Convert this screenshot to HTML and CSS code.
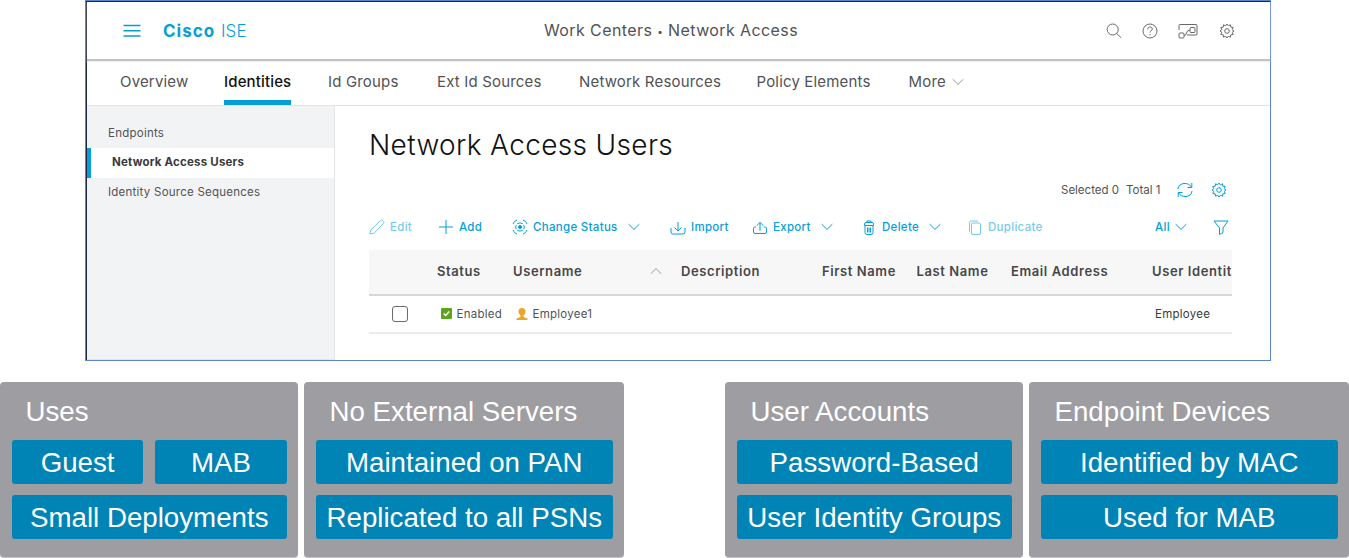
FILE: index.html
```html
<!DOCTYPE html>
<html lang="en">
<head>
<meta charset="utf-8">
<title>Cisco ISE - Network Access Users</title>
<link rel="stylesheet" href="styles.css">
</head>
<body>
<svg class="defs" width="0" height="0">
  <symbol id="chevron" viewBox="0 0 12 8"><path d="M.7 1.2 6 6.4l5.3-5.2"/></symbol>
  <symbol id="gear" viewBox="0 0 16 16"><circle cx="8" cy="8" r="2.3"/><path d="M6.7 2.8 8 1l1.3 1.8 2.2-1 .3 2.4 2.4.3-1 2.2L15 8l-1.8 1.3 1 2.2-2.4.3-.3 2.4-2.2-1L8 15l-1.300-1.800-2.200 1-.3-2.400-2.400-.3 1-2.200L1 8l1.800-1.300-1-2.200 2.400-.3.3-2.400z"/></symbol>
</svg>
<main class="window">
  <header class="topbar">
    <svg class="menu" viewBox="0 0 18 14"><path d="M.5 1.500h17M.5 6.800h17M.5 12h17"/></svg>
    <div class="brand"><b>Cisco</b> <span>ISE</span></div>
    <div class="crumb">Work Centers <i>•</i> Network Access</div>
    <div class="actions">
      <svg viewBox="0 0 16 16"><circle cx="6.700" cy="6.500" r="5.500"/><path d="m10.700 10.500 4.500 4.300"/></svg>
      <svg viewBox="0 0 16 16"><circle cx="8" cy="8" r="7"/><path d="M5.700 6.300C5.700 3.200 10.300 3.300 10.300 6 10.300 7.700 8 7.700 8 9.600M8 11v1.300"/></svg>
      <svg class="wide" viewBox="0 0 20 16"><path d="M1 7V2.500Q1 1.500 2 1.500H18Q19 1.500 19 2.500V11Q19 12 18 12H9M6 12.500Q8 12.500 8.500 10T11 7.300H12"/><rect x="1" y="10" width="5" height="5" rx="1"/><rect x="12" y="4.500" width="5" height="5" rx="1"/></svg>
      <svg><use href="#gear"/></svg>
    </div>
  </header>
  <nav class="tabs">
    <a>Overview</a><a class="on">Identities</a><a>Id Groups</a><a>Ext Id Sources</a><a>Network Resources</a><a>Policy Elements</a><a>More <svg class="chev"><use href="#chevron"/></svg></a>
  </nav>
  <div class="body">
    <aside class="side"><a>Endpoints</a><a class="on">Network Access Users</a><a>Identity Source Sequences</a></aside>
    <section class="content">
      <h1>Network Access Users</h1>
      <div class="summary">
        <span>Selected 0</span><span>Total 1</span>
        <svg viewBox="0 0 16 16"><path d="M1 7C1.500 0 12 0 14.300 5M14.800 1v4.500h-4.300M15 9C14.500 16 4 16 1.700 11M1.200 15v-4.500h4.300"/></svg>
        <svg class="cog"><use href="#gear"/></svg>
      </div>
      <div class="tools">
        <a class="off"><svg viewBox="0 0 16 16"><path d="m1 15 .7-4L11.500 1.600c1.500-1.500 4.500 1 2.900 2.900L5 14.200z"/></svg>Edit</a>
        <a><svg viewBox="0 0 16 16"><path d="M8 1v14M1 8h14"/></svg>Add</a>
        <a><svg viewBox="0 0 16 16"><circle cx="8" cy="8" r="1.500" fill="#049fd9"/><path d="M5.200 4.800Q8 2.800 10.800 4.800M5.200 11.200Q8 13.200 10.800 11.200M4.300 6Q3 8 4.300 10M11.700 6Q13 8 11.700 10M1 5Q2 2 5 1M11 1Q14 2 15 5M15 11Q14 14 11 15M5 15Q2 14 1 11"/></svg>Change Status<svg class="chev"><use href="#chevron"/></svg></a>
        <a><svg viewBox="0 0 16 16"><path d="M1 9v4q0 2 2 2h10q2 0 2-2V9M8 3v9M4.500 8.500 8 12 11.500 8.500"/></svg>Import</a>
        <a><svg viewBox="0 0 16 16"><path d="M4 8H3Q1.500 8 1.500 9.500V13q0 1.500 1.500 1.500h10q1.500 0 1.500-1.500V9.500Q14.500 8 13 8h-1M8 12V3.500M4.800 6.500 8 3.300 11.200 6.500"/></svg>Export<svg class="chev"><use href="#chevron"/></svg></a>
        <a><svg viewBox="0 0 16 16"><path d="M4 7v6.500q0 2 2 2h4q2 0 2-2V7M3.500 6.500V5q0-1.500 1.500-1.500h6q1.500 0 1.500 1.500v1.500zM6 3.500V2h4v1.500M6.500 8.500V13.500M8 8.500V13.500M9.500 8.500V13.500"/></svg>Delete<svg class="chev"><use href="#chevron"/></svg></a>
        <a class="off"><svg viewBox="0 0 16 16"><rect x="4.500" y="4" width="9" height="11.500" rx="1.500"/><path d="M2.500 12.500V3.500q0-1.500 1.500-1.500H11"/></svg>Duplicate</a>
        <a class="all">All<svg class="chev"><use href="#chevron"/></svg></a>
        <svg viewBox="0 0 16 16"><path d="M1 2h14L10 9V13.500L6.500 15.500V9z"/></svg>
      </div>
      <div class="row head">
        <span></span><span>Status</span><span>Username</span><svg class="chev up"><use href="#chevron"/></svg><span>Description</span><span>First Name</span><span>Last Name</span><span>Email Address</span><span>User Identit</span>
      </div>
      <div class="row data">
        <i class="box"></i>
        <span class="status"><svg viewBox="0 0 11 11"><rect width="11" height="11" rx="1" fill="#5aa51c"/><path d="m2.700 5.500 2 2 3.600-3.900" fill="none" stroke="#fff" stroke-width="1.500"/></svg>Enabled</span>
        <span class="user"><svg viewBox="0 0 12 12"><path fill="#e8a62c" d="M6 0C8.200 0 9.700 1.500 9.500 4 9.300 6 8 6.500 7.600 7.500V9L11.500 10.500V12H.5V10.500L4.400 9V7.500C4 6.500 2.700 6 2.500 4 2.300 1.500 3.800 0 6 0z"/></svg>Employee1</span>
        <span class="group">Employee</span>
      </div>
    </section>
  </div>
</main>
<section class="cards">
  <article class="card a"><h2>Uses</h2><p>Guest</p><p>MAB</p><p class="full">Small Deployments</p></article>
  <article class="card b"><h2>No External Servers</h2><p class="full">Maintained on PAN</p><p class="full">Replicated to all PSNs</p></article>
  <article class="card c"><h2>User Accounts</h2><p class="full">Password-Based</p><p class="full">User Identity Groups</p></article>
  <article class="card d"><h2>Endpoint Devices</h2><p class="full">Identified by MAC</p><p class="full">Used for MAB</p></article>
</section>
</body>
</html>
```
FILE: styles.css
```css
* { box-sizing: border-box; }
body { margin: 0; width: 1349px; height: 558px; overflow: hidden; background: #fff; font-family: Inter, "Liberation Sans", sans-serif; color: #525255; }
svg { width: 16px; height: 16px; fill: none; stroke: currentColor; stroke-width: 1; flex: none; }
.defs { display: none; }
.chev { width: 12px; height: 8px; }
.window { width: 1186px; height: 361px; margin-left: 85px; border: 1px solid #5c85cf; box-shadow: inset 1px 1px #20263d; padding: 1px 0 0 1px; display: flex; flex-direction: column; }

.topbar { height: 59px; flex: none; border-bottom: 2px solid #c2c2c2; box-shadow: 0 1px 1px #eee; display: grid; grid-template-columns: 36px 40px 381px 1fr 164px; align-items: center; }
.menu { width: 18px; height: 14px; margin-top: 1px; stroke: #049fd9; stroke-width: 1.500; grid-column: 2; }
.brand { font-size: 17px; color: #049fd9; letter-spacing: 1px; font-weight: 300; }
.brand b { font-weight: 700; }
.brand span { letter-spacing: .2px; }
.crumb { font-size: 16px; letter-spacing: .4px; padding-bottom: 1px; }
.crumb i { font-style: normal; font-size: 10px; vertical-align: 1px; }
.actions { display: grid; grid-template-columns: 36px 36px 41px 16px; align-items: center; color: #69696c; }
.actions .wide { width: 20px; }

.tabs { height: 45px; flex: none; border-bottom: 1px solid #e3e3e5; display: grid; grid-template-columns: 104px 104px 109px 142px 177.500px 152px 60px; padding-left: 33px; font-size: 15px; letter-spacing: .17px; line-height: 41px; white-space: nowrap; }
.tabs a { justify-self: start; height: 44px; }
.tabs .on { color: #111; font-weight: 500; border-bottom: 5px solid #049fd9; letter-spacing: .15px; }
.tabs .chev { margin-left: 2px; vertical-align: 1px; stroke: #999; }

.body { flex: 1; display: flex; }
.side { width: 248px; padding-top: 12.500px; background: #f2f3f5; border-right: 1px solid #e4e5e7; border-bottom: 1px solid #e4e5e7; display: flex; flex-direction: column; font-size: 11.500px; letter-spacing: .24px; }
.side a { height: 29.500px; line-height: 29.500px; padding-left: 21px; }
.side .on { background: #fff; border-left: 4px solid #049fd9; color: #39393b; font-weight: 700; letter-spacing: .2px; }
.content { width: 863px; margin-left: 34px; }
h1 { margin: 20px 0 0; height: 38px; line-height: 38px; font-size: 28px; font-weight: 350; letter-spacing: .35px; color: #111; }
.summary { height: 32px; margin-top: 10px; display: grid; grid-template-columns: 65px 51px 34px 17px; justify-content: end; align-items: center; font-size: 11.500px; letter-spacing: 0; padding-right: 4px; }
.summary svg { stroke: #049fd9; }
.tools { height: 44px; padding-bottom: 2px; display: grid; grid-template-columns: 69px 74px 158px 82px 109px 106px 188px 58px 16px; align-items: center; font-size: 11.500px; font-weight: 500; letter-spacing: .3px; color: #049fd9; white-space: nowrap; }
.tools a { display: flex; align-items: center; gap: 5px; }
.tools .chev { margin-left: 5px; }
.tools .all .chev { margin-left: 0; }
.tools .off { opacity: .55; }
.row { display: grid; align-items: center; }
.head { height: 46px; padding-bottom: 2px; border-bottom: 2px solid #d7d7d8; background: #f7f7f7; grid-template-columns: 68px 76px 137px 31px 141px 94.500px 94.500px 141px 80px; font-size: 13px; font-weight: 600; letter-spacing: .6px; color: #47474a; white-space: nowrap; }
.head .up { transform: scaleY(-1); stroke: #999; }
.data { height: 38px; padding-bottom: 1px; border-bottom: 2px solid #ebebec; grid-template-columns: 72px 75px 639px 77px; font-size: 11.500px; letter-spacing: .25px; }
.box { width: 16px; height: 16px; margin-left: 22.500px; border: 1px solid #6a6a6d; border-radius: 3px; }
.status, .user { display: flex; align-items: center; gap: 4.500px; }
.status svg { width: 11px; height: 11px; stroke: none; }
.user svg { width: 12px; height: 12px; stroke: none; }
.group { color: #39393b; }

.cards { margin-top: 21px; display: flex; align-items: flex-start; font-family: "Liberation Sans", Arial, sans-serif; }
.card { height: 176px; padding: 12.600px 11.500px 0 12px; border-radius: 4px; background: #9e9da2; border-bottom: 1px solid #c5c5c8; display: grid; grid-template-columns: 1fr 1fr; grid-template-rows: 34px 43.500px 43.500px; row-gap: 11.700px; column-gap: 12px; color: #fff; white-space: nowrap; }
.a { width: 298px; }
.b { width: 320px; margin-left: 6px; }
.c { width: 298px; margin-left: 101px; }
.d { width: 320px; margin-left: 6px; }
.card h2 { grid-column: 1 / -1; margin: 0 0 0 13.500px; font-size: 27.700px; line-height: 34px; font-weight: 400; }
.card p { margin: 0; background: #0083b5; border-radius: 3px; text-align: center; font-size: 27.700px; line-height: 45.500px; }
.card .full { grid-column: 1 / -1; }
```
